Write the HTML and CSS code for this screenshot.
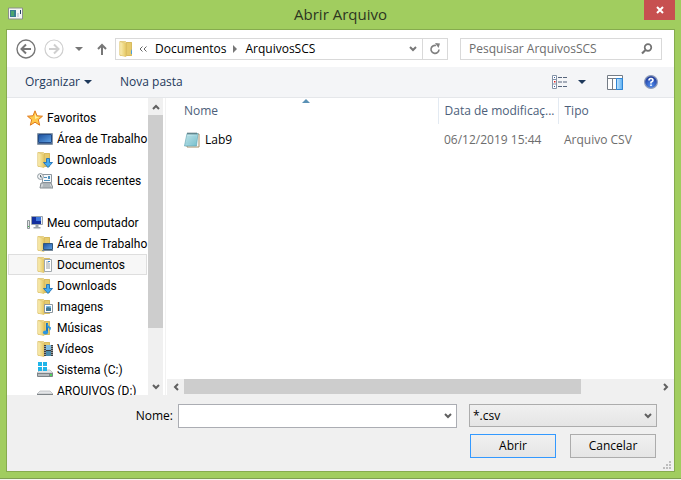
FILE: index.html
```html
<!DOCTYPE html>
<html lang="pt-BR">
<head>
<meta charset="utf-8">
<title>Abrir Arquivo</title>
<link rel="stylesheet" href="styles.css">
</head>
<body>
<svg class="defs" aria-hidden="true">
  <defs>
    <linearGradient id="gold" x1="0" x2="1"><stop offset="0" stop-color="#fbf0b8"/><stop offset="1" stop-color="#e6c964"/></linearGradient>
    <linearGradient id="screen" x1="0" y1="0" x2="1" y2="1"><stop offset="0" stop-color="#1b4f9c"/><stop offset="1" stop-color="#5fa3e6"/></linearGradient>
    <linearGradient id="pad" x1="0" y1="0" x2="1" y2="1"><stop offset="0" stop-color="#d5f1f4"/><stop offset="1" stop-color="#6fbccb"/></linearGradient>
    <radialGradient id="ball" cx="50%" cy="75%" r="70%"><stop offset="0" stop-color="#4f8df0"/><stop offset="1" stop-color="#1c3596"/></radialGradient>
    <linearGradient id="sky" x1="0" x2="1"><stop offset="0" stop-color="#c6e6fd"/><stop offset="1" stop-color="#5aaef2"/></linearGradient>
  </defs>
  <symbol id="folder" viewBox="0 0 16 16">
    <path d="M1 .500h5.500l1 1H12.500V14.500H1z" fill="#f0dc90" stroke="#d9bb5e" stroke-width=".6"/>
    <path d="M7.500 1.500h5v13h-5z" fill="#e6ca6c" stroke="#cfae4c" stroke-width=".6"/>
    <path d="M.800.500l6.200 2v13.300L.800 14z" fill="url(#gold)" stroke="#dcc068" stroke-width=".5"/>
  </symbol>
  <symbol id="chevron" viewBox="0 0 8 6"><path d="M1 1l3 3 3-3" fill="none" stroke="currentColor" stroke-width="2"/></symbol>
  <symbol id="triangle" viewBox="0 0 8 4"><path d="M0 0h8L4 4z" fill="currentColor"/></symbol>
  <symbol id="drive" viewBox="0 0 16 16">
    <path d="M3 8h10l3 3H0z" fill="#e4e6e8" stroke="#a7abae" stroke-width=".6"/>
    <path d="M0 11h16v3q0 1-1 1H1q-1 0-1-1z" fill="#7d8387"/><path d="M1 12h11v2H1z" fill="#b6babd"/><path d="M13 12h2v2h-2z" fill="#50d45e"/>
  </symbol>
  <symbol id="down" viewBox="0 0 16 16"><path d="M9.500 6.500h3v4h3L11 15.500 6.500 10.500h3z" fill="#45aaf0" stroke="#1f72b8" stroke-width=".9"/></symbol>
</svg>

<div class="window">
  <header class="titlebar">
    <svg class="app-icon" viewBox="0 0 16 14"><path d="M.5 1h14v11H.5z" fill="#f4f6f5" stroke="#8b8f8b"/><path d="M2 3h6v7H2z" fill="#397c91"/><path d="M3 4h3v5H3z" fill="#4ba56f"/><path d="M9 6h2v4H9z" fill="#cdd6e2"/><path d="M12 3h1v4h-1z" fill="#254464"/></svg>
    <h1 class="title">Abrir Arquivo</h1>
    <button class="close" type="button" aria-label="Fechar"><svg viewBox="0 0 8 8" width="8" height="8"><path d="M1 1l6 6M7 1L1 7" stroke="#fff" stroke-width="2"/></svg></button>
  </header>

  <main class="dialog">
    <nav class="navbar">
      <button class="round" type="button" aria-label="Voltar"><svg viewBox="0 0 20 20" width="20" height="20"><circle cx="10" cy="10" r="9" fill="none" stroke="currentColor" stroke-width="1.400"/><path d="M15 10H6M10 5.500L5.500 10l4.500 4.500" fill="none" stroke="currentColor" stroke-width="2"/></svg></button>
      <button class="round off" type="button" aria-label="Avançar" disabled><svg viewBox="0 0 20 20" width="20" height="20"><circle cx="10" cy="10" r="9" fill="none" stroke="currentColor" stroke-width="1.200"/><path d="M5 10h9M10 5.500l4.500 4.500-4.500 4.500" fill="none" stroke="currentColor" stroke-width="2"/></svg></button>
      <button class="history" type="button" aria-label="Locais recentes"><svg width="8" height="4"><use href="#triangle"/></svg></button>
      <button class="up" type="button" aria-label="Acima"><svg viewBox="0 0 10 12" width="10" height="12"><path d="M5 12V2M1 6l4-4 4 4" fill="none" stroke="currentColor" stroke-width="2"/></svg></button>
      <div class="address">
        <svg class="icon" viewBox="0 0 16 16"><use href="#folder"/><path d="M12 10l1-2v5h-1z" fill="#4a9fe0"/></svg>
        <svg class="back-marks" viewBox="0 0 8 6" width="8" height="6"><path d="M3.500.500L1 3l2.500 2.500M7.500.500L5 3l2.500 2.500" fill="none" stroke="#666"/></svg>
        <a href="#">Documentos</a>
        <svg class="sep" viewBox="0 0 4 8" width="4" height="8"><path d="M0 0l4 4-4 4z" fill="#777"/></svg>
        <a href="#">ArquivosSCS</a>
        <button class="drop" type="button" aria-label="Locais anteriores"><svg width="8" height="6"><use href="#chevron"/></svg></button>
        <button class="refresh" type="button" aria-label="Atualizar"><svg viewBox="0 0 12 12" width="12" height="12"><path d="M7 2.500A4 4 0 1 0 10 6.500" fill="none" stroke="#808080" stroke-width="1.600"/><path d="M6 0l5 .500L9.500 5z" fill="#808080"/></svg></button>
      </div>
      <label class="search">
        <input type="search" placeholder="Pesquisar ArquivosSCS" aria-label="Pesquisar ArquivosSCS">
        <svg viewBox="0 0 12 12" width="12" height="12"><circle cx="7" cy="4.500" r="3.300" fill="none" stroke="#737373" stroke-width="1.700"/><path d="M4.500 7L1 10.500" stroke="#737373" stroke-width="2.200"/></svg>
      </label>
    </nav>

    <div class="toolbar">
      <button type="button">Organizar <svg width="8" height="4"><use href="#triangle"/></svg></button>
      <button type="button">Nova pasta</button>
      <div class="tools">
        <button type="button" aria-label="Modo de exibição">
          <svg viewBox="0 0 16 14" width="16" height="14"><path d="M.500.500h4v13h-4zM.500 4.500h4M.500 9h4" fill="#fff" stroke="#8392a6"/><path d="M2 2h1v1H2zM2 11h1v1H2z" fill="#345a9e"/><path d="M2 6h1.500v1.500H2z" fill="#e02424"/><path d="M6 2.500h4M11 2.500h4M6 7h4M11 7h4M6 11.500h4M11 11.500h4" stroke="#56657c"/></svg>
        </button>
        <button type="button" aria-label="Mais opções"><svg width="8" height="4"><use href="#triangle"/></svg></button>
        <button type="button" aria-label="Painel de visualização">
          <svg viewBox="0 0 16 15" width="16" height="15"><path d="M.500.500h15v14H.500z" fill="#fff" stroke="#747c86"/><path d="M1 3.500h14M5.500 3v11" stroke="#747c86"/><path d="M9.500 3.500h6v11h-6z" fill="url(#sky)" stroke="#2f86d6"/></svg>
        </button>
        <button type="button" aria-label="Ajuda">
          <svg viewBox="0 0 14 14" width="14" height="14"><circle cx="7" cy="7" r="6.400" fill="url(#ball)" stroke="#8f9dba" stroke-width="1.200"/><path d="M5 5.500Q5 3.500 7 3.500T9 5.300Q9 6.300 7 7.200V8.500" fill="none" stroke="#fff" stroke-width="1.600"/><path d="M6.200 9.500h1.600V11H6.200z" fill="#fff"/></svg>
        </button>
      </div>
    </div>

    <div class="panes">
      <aside class="sidebar">
        <div class="tree">
          <ul>
            <li class="root"><svg class="icon" viewBox="0 0 16 16"><path d="M8 .800l2 5 5.500.400-4.200 3.500 1.400 5.500L8 12.200l-4.700 3 1.400-5.500L.500 6.200 6 5.800z" fill="#ffc94a" stroke="#e07a1e"/><path d="M8 3.500l1.300 3.300 3 .300L8 9z" fill="#fff0a6"/></svg>Favoritos</li>
            <li><svg class="icon" viewBox="0 0 16 16"><path d="M.500 2.500h15v11H.500z" fill="#dce4ec" stroke="#8796a6"/><path d="M1.500 3.500h13v8h-13z" fill="url(#screen)" stroke="#224a86"/><path d="M1 12h14v1H1z" fill="#4f6c92"/></svg>Área de Trabalho</li>
            <li><svg class="icon" viewBox="0 0 16 16"><use href="#folder"/><use href="#down"/></svg>Downloads</li>
            <li><svg class="icon" viewBox="0 0 16 16"><path d="M5.500 1.500h9v8h-9z" fill="#f5f8fa" stroke="#8c969e"/><path d="M7 4h3v1H7zM11 3h2v3h-2zM7 7h6v1H7z" fill="#4e91bd"/><circle cx="3.500" cy="3.500" r="2.900" fill="#f3f5f6" stroke="#8f999f"/><path d="M3.500 2v2H5" fill="none" stroke="#5a6870"/><path d="M4 10h10l2 5H3z" fill="#d0d5d8" stroke="#858d92"/><path d="M6 12h7M5.500 14H14" stroke="#8f989d"/></svg>Locais recentes</li>
          </ul>
          <ul>
            <li class="root"><svg class="icon" viewBox="0 0 16 16"><path d="M.500 5.500h2v8h-2z" fill="#e1e4e6" stroke="#8e9599"/><path d="M1 11h1v1H1z" fill="#3bb54a"/><path d="M4.500 1.500h11v8h-11z" fill="#e8edf2" stroke="#9ba4ad"/><path d="M5 2h9v7H5z" fill="#142f9e"/><path d="M9 2h5v4H9z" fill="#3e78dd"/><path d="M8.500 10h3v2h2v1.500h-7V12h2z" fill="#9ca4ab"/></svg>Meu computador</li>
            <li><svg class="icon" viewBox="0 0 16 16"><use href="#folder"/><path d="M6.500 7.500h9v6h-9z" fill="url(#screen)" stroke="#31577c"/><path d="M5 14h11v1H5z" fill="#788b9d"/></svg>Área de Trabalho</li>
            <li class="selected"><svg class="icon" viewBox="0 0 16 16"><use href="#folder"/><path d="M7.500 2.500h7v12h-7z" fill="#fff" stroke="#a2a9ad"/><path d="M9 5h3M9 7h4M9 9h4M9 11h4" stroke="#969ea4"/><path d="M11 4h2v1h-2z" fill="#3789d2"/></svg>Documentos</li>
            <li><svg class="icon" viewBox="0 0 16 16"><use href="#folder"/><use href="#down"/></svg>Downloads</li>
            <li><svg class="icon" viewBox="0 0 16 16"><use href="#folder"/><path d="M7.500 5.500h8v8h-8z" fill="#fff" stroke="#8d979e"/><path d="M9 7h5v2H9z" fill="#77b8e5"/><path d="M9 9l2-1 3 1v3H9z" fill="#417997"/></svg>Imagens</li>
            <li><svg class="icon" viewBox="0 0 16 16"><use href="#folder"/><path d="M10 3v9" stroke="#1b78be" stroke-width="2"/><path d="M10 3q1 3 4 4.500 0 2-1.500 3.500.500-3-2.500-4z" fill="#2b95df"/><ellipse cx="8.500" cy="12.500" rx="2.600" ry="2" fill="#2b95df"/></svg>Músicas</li>
            <li><svg class="icon" viewBox="0 0 16 16"><use href="#folder"/><path d="M7 4h9v11H7z" fill="#3b3e40"/><path d="M9 4h5v5H9z" fill="#80bce0"/><path d="M9 10h5v5H9z" fill="#4b8cab"/><path d="M8 5v10M15 5v10" stroke="#eee" stroke-dasharray="1 1"/></svg>Vídeos</li>
            <li><svg class="icon" viewBox="0 0 16 16"><use href="#drive"/><path d="M1 0h4v4H1zM6 0h4v4H6zM1 5h4v4H1zM6 5h4v4H6z" fill="#20b5e9"/></svg>Sistema (C:)</li>
            <li><svg class="icon" viewBox="0 0 16 16"><use href="#drive"/></svg>ARQUIVOS (D:)</li>
          </ul>
        </div>
        <div class="vscroll">
          <button class="turn" type="button" aria-label="Rolar para cima"><svg width="8" height="6"><use href="#chevron"/></svg></button>
          <div class="track"><div class="thumb"></div></div>
          <button type="button" aria-label="Rolar para baixo"><svg width="8" height="6"><use href="#chevron"/></svg></button>
        </div>
      </aside>

      <section class="files">
        <table>
          <thead>
            <tr><th class="name">Nome<svg class="sort" viewBox="0 0 8 4" width="8" height="4"><path d="M0 4l4-4 4 4z" fill="#5b91b5"/></svg></th><th class="date">Data de modificaç...</th><th>Tipo</th></tr>
          </thead>
          <tbody>
            <tr><td><span class="file"><svg class="icon" viewBox="0 0 16 16"><path d="M4 2h11v13H3z" fill="#fff" stroke="#a58d67"/><path d="M3 1.500h11L12.500 14H.500z" fill="url(#pad)" stroke="#69a8b4" stroke-width=".7"/><path d="M3 5h9M3 7h9M2.500 9h9M2 11h9" stroke="#8fc8d2" stroke-width=".6"/><path d="M4 .500v2M6 .500v2M8 .500v2M10 .500v2M12 .500v2" stroke="#3f5960"/></svg>Lab9</span></td><td>06/12/2019 15:44</td><td>Arquivo CSV</td></tr>
          </tbody>
        </table>
        <div class="hscroll">
          <button class="left" type="button" aria-label="Rolar para a esquerda"><svg width="8" height="6"><use href="#chevron"/></svg></button>
          <div class="track"><div class="thumb"></div></div>
          <button class="right" type="button" aria-label="Rolar para a direita"><svg width="8" height="6"><use href="#chevron"/></svg></button>
        </div>
      </section>
    </div>

    <form class="footer">
      <label for="filename">Nome:</label>
      <div class="combo">
        <input id="filename" type="text">
        <button type="button" aria-label="Nomes recentes"><svg width="8" height="6"><use href="#chevron"/></svg></button>
      </div>
      <div class="filter">
        <select aria-label="Tipo de arquivo"><option>*.csv</option></select>
        <svg width="8" height="6"><use href="#chevron"/></svg>
      </div>
      <div class="actions">
        <button class="primary" type="button">Abrir</button>
        <button type="button">Cancelar</button>
      </div>
      <svg class="grip" viewBox="0 0 8 8" width="8" height="8"><path d="M6 0h2v2H6zM3 3h2v2H3zM6 3h2v2H6zM0 6h2v2H0zM3 6h2v2H3zM6 6h2v2H6z" fill="#bdbdbd"/></svg>
    </form>
  </main>
</div>
</body>
</html>
```
FILE: styles.css
```css
* { box-sizing: border-box; }

body {
  margin: 0;
  background: #f4f7ee;
  color: #000;
  font: 12px/20px "Open Sans", "Noto Sans", sans-serif;
}

button, input, select {
  margin: 0;
  padding: 0;
  border: 0;
  background: none;
  color: inherit;
  font: inherit;
}

button {
  display: flex;
  align-items: center;
  justify-content: center;
}

svg { display: block; flex: none; }
a { color: inherit; text-decoration: none; }

.defs { position: absolute; width: 0; height: 0; }
.icon { width: 16px; height: 16px; }

.window {
  display: flex;
  flex-direction: column;
  height: calc(100vh - 1px);
  padding: 0 6px 6px;
  background: #a1cd5f;
  border-bottom: 1px solid #7f9f50;
}

.titlebar {
  display: grid;
  grid-template-columns: 46px 1fr 46px;
  flex: none;
  height: 29px;
}
.app-icon { width: 16px; height: 14px; margin: 7px 0 0 2px; }
.title {
  margin: 0;
  color: #2d351f;
  font-size: 15px;
  font-weight: 400;
  line-height: 29px;
  text-align: center;
}
.close { width: 31px; height: 20px; margin-left: 15px; background: #c75050; }

.dialog {
  display: flex;
  flex: 1;
  flex-direction: column;
  min-height: 0;
  border: 1px solid #86ab4e;
  background: #fff;
}

.navbar {
  display: flex;
  align-items: center;
  flex: none;
  height: 37px;
  padding: 0 12px 0 9px;
}
.round { margin-right: 8px; color: #777; }
.round.off { color: #cfcfcf; }
.history { margin: 0 14px 0 3px; color: #777; }
.up { margin-right: 8px; color: #777; }
.address {
  display: flex;
  align-items: center;
  flex: 1;
  height: 22px;
  padding-left: 3px;
  border: 1px solid #d9d9d9;
}
.back-marks { margin: 0 8px 0 4px; }
.sep { margin: 0 8px 0 7px; }
.drop { width: 18px; height: 20px; margin-left: auto; color: #777; }
.refresh { width: 25px; height: 20px; border-left: 1px solid #d9d9d9; }
.search {
  display: flex;
  align-items: center;
  flex: 0 1 202px;
  height: 22px;
  margin-left: 12px;
  padding: 0 8px;
  border: 1px solid #d9d9d9;
}
.search input { flex: 1; min-width: 0; outline: 0; }
.search input::placeholder { color: #6d6d6d; opacity: 1; }

.toolbar {
  display: flex;
  align-items: center;
  flex: none;
  gap: 28px;
  height: 31px;
  padding: 0 16px 0 18px;
  border-bottom: 1px solid #e5e7ea;
  background: #f4f5f7;
  color: #1e395b;
}
.toolbar button { gap: 4px; }
.tools { display: flex; align-items: center; margin-left: auto; }
.tools button + button { margin-left: 10px; }
.tools button:nth-child(n + 3) { margin-left: 21px; }

.panes { display: flex; flex: 1; min-height: 0; }
.sidebar { display: flex; flex: 0 0 156px; min-width: 0; }
.tree {
  flex: 1;
  min-width: 0;
  padding: 9px 1px 0;
  overflow: hidden;
  font-family: Roboto, "Open Sans", sans-serif;
}
.tree ul { margin: 0 0 21px; padding: 0; list-style: none; }
.tree li {
  display: flex;
  align-items: center;
  gap: 4px;
  height: 21px;
  padding-left: 28px;
  border: 1px solid transparent;
  white-space: nowrap;
}
.tree .root { padding-left: 18px; }
.tree .selected { border-color: #dedede; background: #f7f7f7; }

.vscroll, .hscroll { display: flex; flex: none; background: #f0f0f0; color: #606060; }
.vscroll { flex-direction: column; width: 15px; }
.vscroll button { height: 17px; }
.turn svg { transform: rotate(180deg); }
.track { display: flex; flex: 1; }
.thumb { background: #cdcdcd; }
.vscroll .thumb { width: 100%; height: 81%; }
.hscroll { height: 16px; margin-left: 1px; }
.hscroll button { width: 17px; }
.hscroll .thumb { width: 84%; height: 15px; }
.left svg { transform: rotate(90deg); }
.right svg { transform: rotate(-90deg); }

.files {
  display: flex;
  flex: 1;
  flex-direction: column;
  justify-content: space-between;
  min-width: 0;
  margin-left: 2px;
  border-left: 1px solid #f2f2f2;
}
.files table { width: 100%; border-collapse: collapse; table-layout: fixed; }
.files th {
  position: relative;
  height: 26px;
  padding: 0 6px;
  color: #4c607a;
  font-weight: 400;
  text-align: left;
  white-space: nowrap;
}
.files th + th { border-left: 1px solid #e3eaf2; }
.files .name { width: 272px; padding-left: 18px; }
.files .date { width: 120px; }
.sort { position: absolute; top: 1px; left: 50%; }
.files td { height: 32px; padding: 0 6px; color: #6d6d6d; }
.files td:first-child { padding-left: 18px; color: #000; }
.file { display: flex; align-items: center; gap: 5px; }

.footer {
  position: relative;
  display: grid;
  grid-template-columns: 166px 1fr 188px;
  align-content: start;
  row-gap: 6px;
  flex: none;
  height: 76px;
  padding: 9px 17px 0 0;
  background: #f0f0f0;
}
.footer label { text-align: right; line-height: 24px; }
.combo {
  display: flex;
  height: 24px;
  margin: 0 12px 0 5px;
  border: 1px solid #abadb3;
  background: #fff;
}
.combo input { flex: 1; min-width: 0; padding: 0 4px; outline: 0; }
.combo button { width: 16px; color: #606060; }
.filter {
  display: flex;
  align-items: center;
  height: 23px;
  padding-right: 4px;
  border: 1px solid #acacac;
  background: linear-gradient(#f0f0f0, #e5e5e5);
  color: #606060;
}
.filter select { flex: 1; height: 21px; padding-left: 3px; appearance: none; color: #000; }
.actions { display: flex; grid-column: 3; gap: 14px; padding: 0 1px; }
.actions button {
  flex: 1;
  height: 24px;
  border: 1px solid #acacac;
  background: linear-gradient(#f0f0f0, #e5e5e5);
}
.actions .primary { border-color: #3399ff; }
.grip { position: absolute; right: 3px; bottom: 2px; }
```
